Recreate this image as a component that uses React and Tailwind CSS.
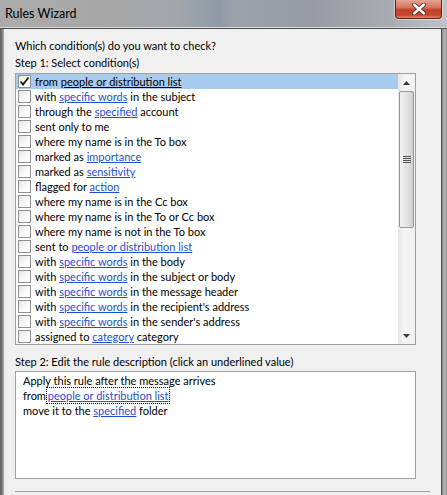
import React from "react";

const FONT = { fontFamily: 'Lato, "Noto Sans", sans-serif' };

const conditions = [
  ["from ", "people or distribution list", ""],
  ["with ", "specific words", " in the subject"],
  ["through the ", "specified", " account"],
  ["sent only to me"],
  ["where my name is in the To box"],
  ["marked as ", "importance", ""],
  ["marked as ", "sensitivity", ""],
  ["flagged for ", "action", ""],
  ["where my name is in the Cc box"],
  ["where my name is in the To or Cc box"],
  ["where my name is not in the To box"],
  ["sent to ", "people or distribution list", ""],
  ["with ", "specific words", " in the body"],
  ["with ", "specific words", " in the subject or body"],
  ["with ", "specific words", " in the message header"],
  ["with ", "specific words", " in the recipient's address"],
  ["with ", "specific words", " in the sender's address"],
  ["assigned to ", "category", " category"],
];

const Checkbox = ({ checked }) => (
  <div className="w-[13px] h-[13px] shrink-0 border border-[#8e8f8f] bg-[linear-gradient(135deg,#e4e4e4,#ffffff_70%)] flex items-center justify-center">
    {checked && (
      <svg width="11" height="11" viewBox="0 0 11 11">
        <path d="M1.5 5.5 L4 8.5 L9.5 1.5" fill="none" stroke="#111" strokeWidth="1.8" />
      </svg>
    )}
  </div>
);

const Row = ({ item, selected }) => {
  const [pre, link, post] = item;
  return (
    <div className={`h-[15px] flex items-center pl-[2px] ${selected ? "bg-[#a8cbf0]" : ""}`}>
      <Checkbox checked={selected} />
      <span className="ml-[4px] whitespace-pre text-black leading-[14px]">
        {pre}
        {link && (
          <span className={`underline ${selected ? "text-black" : "text-[#1f4fd1]"}`}>{link}</span>
        )}
        {post}
      </span>
    </div>
  );
};

const ScrollBar = () => (
  <div className="w-[17px] shrink-0 flex flex-col bg-[linear-gradient(90deg,#e6e6e6,#f5f5f5_40%,#f1f1f1)]">
    <div className="h-[17px] flex items-center justify-center">
      <svg width="7" height="4" viewBox="0 0 7 4">
        <path d="M0 4 L3.5 0 L7 4 Z" fill="#3c3c3c" />
      </svg>
    </div>
    <div className="h-[137px] mx-[1px] rounded-[2px] border border-[#979797] bg-[linear-gradient(90deg,#f2f2f2,#e2e2e2_55%,#cfcfcf)] flex items-center justify-center">
      <div className="flex flex-col gap-[1px]">
        <div className="w-[8px] h-[1px] bg-[#555]" />
        <div className="w-[8px] h-[1px] bg-[#555]" />
        <div className="w-[8px] h-[1px] bg-[#555]" />
        <div className="w-[8px] h-[1px] bg-[#555]" />
      </div>
    </div>
    <div className="flex-1" />
    <div className="h-[17px] flex items-center justify-center">
      <svg width="7" height="4" viewBox="0 0 7 4">
        <path d="M0 0 L3.5 4 L7 0 Z" fill="#3c3c3c" />
      </svg>
    </div>
  </div>
);

const CloseButton = () => (
  <div className="absolute left-[395px] top-0 w-[47px] h-[19px] rounded-b-[4px] border border-t-0 border-[#5a2418] shadow-[0_0_0_1px_rgba(255,255,255,0.45)] bg-[linear-gradient(180deg,#e7a494_0%,#d8765f_40%,#c2412a_55%,#c8482f_85%,#e08a6c_100%)] flex items-center justify-center">
    <svg width="14" height="12" viewBox="0 0 14 12">
      <path d="M2 1.5 L12 10.5 M12 1.5 L2 10.5" stroke="#4a2a24" strokeWidth="4.2" strokeLinecap="round" />
      <path d="M2 1.5 L12 10.5 M12 1.5 L2 10.5" stroke="#ffffff" strokeWidth="2.4" strokeLinecap="round" />
    </svg>
  </div>
);

export default function App() {
  return (
    <div className="w-[447px] h-[495px] overflow-hidden relative flex flex-col text-[11px] text-black" style={FONT}>
      {/* title bar */}
      <div className="h-[29px] shrink-0 relative border-b border-[#4e4e4e] bg-[linear-gradient(90deg,#ababab_0%,#a7a7a7_25%,#a2a6ab_40%,#8f9aa7_49%,#9ca2aa_52%,#979ca4_70%,#a9adb3_88%,#bfc2c6_100%)]">
        <div className="absolute left-0 right-0 bottom-0 h-[1px] bg-[#d8dbde]" />
        <div className="pl-[5px] pt-[5px] text-[12.5px] text-black leading-[17px]">Rules Wizard</div>
        <CloseButton />
      </div>

      <div className="flex-1 flex">
        {/* left frame */}
        <div className="w-[3px] shrink-0 bg-[linear-gradient(90deg,#5c5c5c,#8d8d8d)]" />

        {/* content */}
        <div className="flex-1 bg-[#f0f0f0] border-l border-[#a0a0a0] pl-[11px] pt-[9px]">
          <div className="leading-[15px]">Which condition(s) do you want to check?</div>
          <div className="leading-[15px] mt-[2px]">Step 1: Select condition(s)</div>

          <div className="mt-[3px] w-[401px] h-[272px] border border-[#a0a0a0] bg-white flex">
            <div className="flex-1 flex flex-col leading-[15px]">
              {conditions.map((c, i) => (
                <Row key={i} item={c} selected={i === 0} />
              ))}
            </div>
            <ScrollBar />
          </div>

          <div className="leading-[15px] mt-[9px]">Step 2: Edit the rule description (click an underlined value)</div>

          <div className="mt-[2px] w-[401px] h-[108px] border border-[#a0a0a0] bg-white pl-[7px] pt-[1px] leading-[15px]">
            <div>Apply this rule after the message arrives</div>
            <div className="flex">
              <span className="whitespace-pre">from </span>
              <span className="outline outline-1 outline-dotted outline-black -ml-[2px] pl-[1px] text-[#1f4fd1] underline">
                people or distribution list
              </span>
            </div>
            <div>
              move it to the <span className="text-[#1f4fd1] underline">specified</span> folder
            </div>
          </div>

          <div className="mt-[12px] w-[415px] h-[1px] bg-[#a0a0a0]" />
        </div>

        {/* right frame */}
        <div className="w-[6px] shrink-0 border-l border-[#4f4f4f] bg-[linear-gradient(90deg,#8a8a8a,#b4b4b4,#9a9a9a)]" />
      </div>
    </div>
  );
}
